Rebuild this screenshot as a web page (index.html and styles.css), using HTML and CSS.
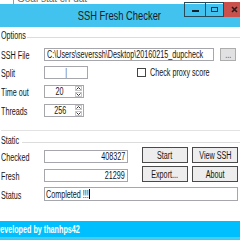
FILE: index.html
```html
<!DOCTYPE html>
<html lang="en">
<head>
    <meta charset="UTF-8">
    <title>SSH Fresh Checker</title>
    <link rel="stylesheet" href="styles.css">
</head>
<body>
    <div class="strip"><span class="strip-text">Goal stat ch dat</span></div>

    <div class="titlebar">
        <span class="t title">SSH Fresh Checker</span>
        <div class="controls">
            <span class="ctl min"><i></i></span>
            <span class="ctl max"><i></i></span>
            <span class="ctl close">
                <svg width="7" height="7" viewBox="0 0 7 7"><path d="M1 1L6 6M6 1L1 6" stroke="#2a1a1a" stroke-width="1.6"/></svg>
            </span>
        </div>
    </div>

    <div class="client">
        <div class="legend"><span class="t legend-text w-options">Options</span><span class="rule"></span></div>

        <div class="row row-file">
            <span class="lbl"><span class="t">SSH File</span></span>
            <div class="box file"><span class="t">C:\Users\severssh\Desktop\20160215_dupcheck</span></div>
            <div class="btn dots"><span class="t mid">...</span></div>
        </div>

        <div class="row row-split">
            <span class="lbl"><span class="t">Split</span></span>
            <div class="box split"><span class="t mid">|</span></div>
            <span class="check"></span>
            <span class="t">Check proxy score</span>
        </div>

        <div class="row row-timeout">
            <span class="lbl"><span class="t">Time out</span></span>
            <div class="box spin">
                <span class="spin-val"><span class="t mid">20</span></span>
                <span class="arrows">
                    <span class="arr"><svg width="5" height="3" viewBox="0 0 5 3"><path d="M0.5 2.5L2.5 0.5L4.5 2.5" fill="none" stroke="#333"/></svg></span>
                    <span class="arr"><svg width="5" height="3" viewBox="0 0 5 3"><path d="M0.5 0.5L2.5 2.5L4.5 0.5" fill="none" stroke="#333"/></svg></span>
                </span>
            </div>
        </div>

        <div class="row row-threads">
            <span class="lbl"><span class="t">Threads</span></span>
            <div class="box spin">
                <span class="spin-val"><span class="t mid">256</span></span>
                <span class="arrows">
                    <span class="arr"><svg width="5" height="3" viewBox="0 0 5 3"><path d="M0.5 2.5L2.5 0.5L4.5 2.5" fill="none" stroke="#333"/></svg></span>
                    <span class="arr"><svg width="5" height="3" viewBox="0 0 5 3"><path d="M0.5 0.5L2.5 2.5L4.5 0.5" fill="none" stroke="#333"/></svg></span>
                </span>
            </div>
        </div>

        <div class="sep"></div>

        <div class="legend legend-static"><span class="t legend-text w-static">Static</span><span class="rule"></span></div>

        <div class="row row-checked">
            <span class="lbl"><span class="t">Checked</span></span>
            <div class="box num"><span class="t right">408327</span></div>
            <div class="btn act first"><span class="t mid">Start</span></div>
            <div class="btn act"><span class="t mid">View SSH</span></div>
        </div>

        <div class="row row-fresh">
            <span class="lbl"><span class="t">Fresh</span></span>
            <div class="box num"><span class="t right">21299</span></div>
            <div class="btn act first"><span class="t mid">Export...</span></div>
            <div class="btn act"><span class="t mid">About</span></div>
        </div>

        <div class="row row-status">
            <span class="lbl"><span class="t">Status</span></span>
            <div class="box status"><span class="t">Completed !!!</span><span class="caret"></span></div>
        </div>
    </div>

    <div class="footer"><span class="t credit">Developed by thanhps42</span></div>
    <div class="footer-edge"></div>
    <div class="footer-base"></div>
</body>
</html>
```

FILE: styles.css
```css
body {
    margin: 0;
    width: 240px;
    height: 240px;
    overflow: hidden;
    background: #fff;
    font-family: "Liberation Sans", Arial, sans-serif;
    font-size: 10px;
    color: #151515;
    position: relative;
}
.t {
    display: inline-block;
    white-space: nowrap;
    transform: scaleX(.72);
    transform-origin: left center;
}
.t.mid {
    transform-origin: center center;
}
.t.right {
    transform-origin: right center;
}
.strip {
    height: 4px;
    overflow: hidden;
}
.strip-text {
    display: block;
    margin: -6px 0 0 13px;
    padding-left: 3px;
    border-left: 1px solid #999;
    line-height: 10px;
    color: #666;
}
.titlebar {
    height: 23px;
    background: #42c2ef;
    display: flex;
    align-items: center;
    justify-content: center;
}
.title {
    font-size: 12px;
    color: #1b1b1b;
    transform: scaleX(.78);
    transform-origin: center center;
    margin-left: -2px;
}
.controls {
    position: absolute;
    top: 2px;
    left: 184px;
    display: flex;
}
.ctl {
    height: 15px;
    box-sizing: border-box;
    display: flex;
    align-items: center;
    justify-content: center;
}
.min {
    width: 22px;
    border: 1px solid #264a5a;
}
.min i {
    width: 7px;
    height: 2px;
    margin-top: 2px;
    background: #10202a;
}
.max {
    width: 18px;
    border: 1px solid #264a5a;
    border-left: none;
}
.max i {
    width: 7px;
    height: 5px;
    box-sizing: border-box;
    border: 1px solid #1a3440;
    margin-top: -1px;
}
.close {
    width: 16px;
    background: #c9504b;
    justify-content: flex-end;
    padding-right: 2px;
}
.client {
    padding-left: 1px;
}
.legend {
    display: flex;
    align-items: center;
    height: 10px;
    margin-top: 4px;
}
.legend-text {
    line-height: 10px;
}
.w-options {
    width: 26px;
}
.w-static {
    width: 21px;
}
.rule {
    flex: 1;
    height: 1px;
    background: #dcdcdc;
    margin-top: 2px;
}
.row {
    display: flex;
    align-items: center;
}
.lbl {
    width: 43px;
    flex: none;
    padding-top: 3px;
}
.box {
    height: 13px;
    box-sizing: border-box;
    border: 1px solid #a5a7ad;
    background: #fff;
    display: flex;
    align-items: center;
    overflow: hidden;
    padding: 0 2px;
    flex: none;
}
.row-file {
    margin-top: 6px;
}
.file {
    width: 170px;
}
.btn {
    box-sizing: border-box;
    display: flex;
    align-items: center;
    justify-content: center;
    flex: none;
}
.dots {
    width: 16px;
    height: 13px;
    margin-left: 6px;
    background: #e1e1e1;
    border: 1px solid #adadad;
    color: #555;
}
.row-split {
    margin-top: 4px;
}
.split {
    width: 44px;
    justify-content: center;
    color: #555;
}
.check {
    width: 9px;
    height: 9px;
    box-sizing: border-box;
    border: 1px solid #444;
    margin: 0 4px 0 49px;
}
.row-timeout {
    margin-top: 5px;
}
.row-threads {
    margin-top: 5px;
}
.spin {
    width: 40px;
    padding: 0 1px 0 0;
}
.spin-val {
    flex: 1;
    display: flex;
    justify-content: center;
}
.arrows {
    display: flex;
    flex-direction: column;
    gap: 1px;
}
.arr {
    width: 7px;
    height: 5px;
    box-sizing: border-box;
    border: 1px solid #c8c8c8;
    display: flex;
    align-items: center;
    justify-content: center;
}
.arr svg {
    display: block;
}
.sep {
    height: 1px;
    background: #e2e2e2;
    margin-top: 13px;
}
.legend-static {
    margin-top: 5px;
}
.num {
    width: 84px;
    justify-content: flex-end;
}
.row-checked {
    margin-top: 1px;
    align-items: flex-end;
}
.row-fresh {
    margin-top: 3px;
    align-items: flex-end;
}
.act {
    width: 46px;
    height: 16px;
    background: #ededed;
    border: 1px solid #4a4a4a;
    margin-left: 4px;
}
.act.first {
    margin-left: 14px;
}
.row-status {
    margin-top: 5px;
}
.status {
    width: 194px;
    height: 14px;
    padding-left: 1px;
}
.caret {
    width: 1px;
    height: 10px;
    background: #000;
    margin-left: -16px;
}
.footer {
    margin-top: 20px;
    height: 16px;
    background: #00bfff;
    display: flex;
    align-items: center;
    overflow: hidden;
}
.credit {
    color: #fff;
    font-weight: bold;
    margin-left: -5px;
}
.footer-edge {
    height: 2px;
    background: #45cdf4;
}
.footer-base {
    height: 5px;
    background: #78b4c8;
}
```
